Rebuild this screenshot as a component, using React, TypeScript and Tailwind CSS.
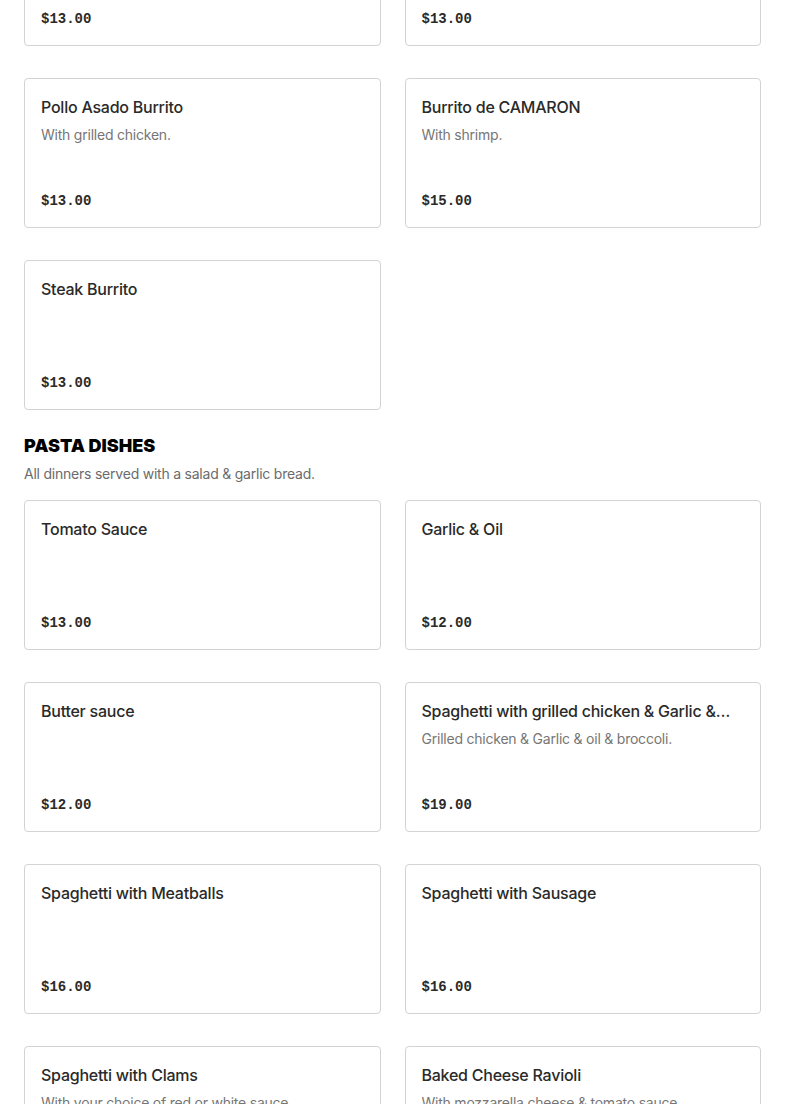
import React from "react";

type Item = {
  name: string;
  description?: string;
  price: string;
};

type Section = {
  title?: string;
  subtitle?: string;
  items: Item[];
};

const sections: Section[] = [
  {
    items: [
      { name: "Bean & Cheese Burrito", price: "$13.00" },
      { name: "Carnitas Burrito", price: "$13.00" },
      { name: "Pollo Asado Burrito", description: "With grilled chicken.", price: "$13.00" },
      { name: "Burrito de CAMARON", description: "With shrimp.", price: "$15.00" },
      { name: "Steak Burrito", price: "$13.00" },
    ],
  },
  {
    title: "Pasta Dishes",
    subtitle: "All dinners served with a salad & garlic bread.",
    items: [
      { name: "Tomato Sauce", price: "$13.00" },
      { name: "Garlic & Oil", price: "$12.00" },
      { name: "Butter sauce", price: "$12.00" },
      {
        name: "Spaghetti with grilled chicken & Garlic & oil",
        description: "Grilled chicken & Garlic & oil & broccoli.",
        price: "$19.00",
      },
      { name: "Spaghetti with Meatballs", price: "$16.00" },
      { name: "Spaghetti with Sausage", price: "$16.00" },
      {
        name: "Spaghetti with Clams",
        description: "With your choice of red or white sauce.",
        price: "$18.00",
      },
      {
        name: "Baked Cheese Ravioli",
        description: "With mozzarella cheese & tomato sauce.",
        price: "$15.00",
      },
    ],
  },
];

const MenuCard: React.FC<{ item: Item }> = ({ item }) => (
  <div className="flex h-[150px] flex-col justify-between rounded-[4px] border border-[#d3d3d3] bg-white px-4 pt-4 pb-[15px]">
    <div className="min-w-0 pr-3">
      <h3 className="truncate text-[16px] leading-6 font-medium tracking-[-0.015em] text-[#2a2a2a]">
        {item.name}
      </h3>
      {item.description && (
        <p className="mt-[6px] truncate text-[14px] leading-5 tracking-[-0.016em] text-[#767676]">
          {item.description}
        </p>
      )}
    </div>
    <p className="font-['Liberation_Mono',monospace] text-[14px] leading-[22px] font-bold text-[#2a2a2a]">
      {item.price}
    </p>
  </div>
);

export default function App() {
  return (
    <div className="min-h-screen overflow-hidden bg-white font-['Inter',sans-serif]">
      <div className="-mt-[104px] px-6">
        {sections.map((section, i) => (
          <section key={i} className="mb-6">
            {section.title && (
              <div className="mb-4">
                <h2 className="text-[18px] leading-6 font-black uppercase text-black">
                  {section.title}
                </h2>
                <p className="mt-[6px] text-[14px] leading-5 tracking-[-0.016em] text-[#6b6b6b]">
                  {section.subtitle}
                </p>
              </div>
            )}
            <div className="grid grid-cols-2 gap-x-6 gap-y-8">
              {section.items.map((item) => (
                <MenuCard key={item.name} item={item} />
              ))}
            </div>
          </section>
        ))}
      </div>
    </div>
  );
}
